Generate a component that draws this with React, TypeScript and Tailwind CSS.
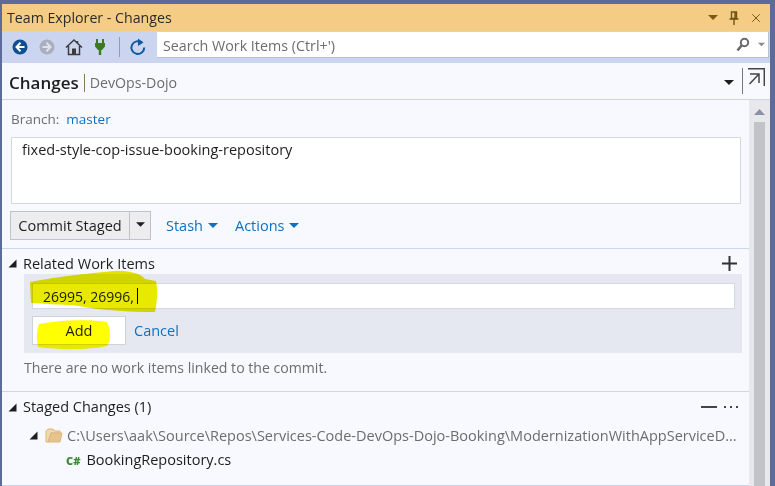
import { X } from "lucide-react";

const font = "font-['Open_Sans','Noto_Sans',sans-serif]";

function Triangle() {
  return (
    <svg width="11" height="11" viewBox="0 0 11 11" className="shrink-0">
      <path d="M9.5 1.5V9.5H1.5Z" fill="#1e1e1e" />
    </svg>
  );
}

function Caret({ className = "" }: { className?: string }) {
  return (
    <svg width="10" height="5" viewBox="0 0 10 5" className={className}>
      <path d="M0 0H10L5 5Z" fill="currentColor" />
    </svg>
  );
}

function Toolbar() {
  return (
    <div className="flex h-8 shrink-0 items-center bg-[#ccd5f0] pl-[10px] pr-[1px]">
      <svg width="16" height="16" viewBox="0 0 16 16">
        <circle cx="8" cy="8" r="7.5" fill="#0e4f8f" />
        <path d="M8.5 3.8 4.5 8l4 4.2M4.8 8H12.5" fill="none" stroke="#fff" strokeWidth="2" />
      </svg>
      <svg width="16" height="16" viewBox="0 0 16 16" className="ml-[11px]">
        <circle cx="8" cy="8" r="7.5" fill="#a9afbd" />
        <path d="M7.5 3.8 11.5 8l-4 4.2M11.2 8H3.5" fill="none" stroke="#dfe3ee" strokeWidth="2" />
      </svg>
      <svg width="18" height="18" viewBox="0 0 18 18" className="ml-[10px]">
        <path d="M1 9.5 9 2l8 7.5M3.5 8v8.5h11V8M12.5 3v3" fill="none" stroke="#3c3c3c" strokeWidth="1.5" />
        <path d="M7 16.5v-6h4v6Z" fill="#3c3c3c" />
      </svg>
      <svg width="10" height="18" viewBox="0 0 10 18" className="ml-[12px]">
        <path d="M2 1v4M8 1v4" stroke="#3b7a1e" strokeWidth="2" />
        <path d="M0 5h10v3.5L7 12H6.2v5H3.8v-5H3L0 8.5Z" fill="#3b7a1e" />
      </svg>
      <div className="ml-[14px] h-[20px] w-px bg-[#8e9bbd]" />
      <svg width="18" height="18" viewBox="0 0 18 18" className="ml-[9px]">
        <path d="M12.8 4.6A6.4 6.4 0 1 0 15.2 9.5" fill="none" stroke="#0e5a9c" strokeWidth="2" />
        <path d="M9 0.5V8L14.5 4.5Z" fill="#0e5a9c" />
      </svg>
      <div className="mb-[4px] ml-[10px] flex h-[26px] min-w-0 flex-1 items-center border-b border-r border-[#b9c0d3] bg-white pl-[6px] text-[14.3px] text-[#6d6d6d]">
        <span className="flex-1 pt-[2px]">Search Work Items (Ctrl+')</span>
        <svg width="18" height="16" viewBox="0 0 18 16" className="mr-[2px]">
          <circle cx="8.5" cy="5.5" r="3.7" fill="none" stroke="#6a6a6a" strokeWidth="2" />
          <path d="M5.7 8.3 1.5 13.5" stroke="#6a6a6a" strokeWidth="2.6" />
        </svg>
        <Caret className="ml-[2px] mr-[3px] w-[7px] text-[#8a8a8a]" />
      </div>
    </div>
  );
}

function SectionHeading({ title, className, children }: { title: string; className: string; children?: React.ReactNode }) {
  return (
    <div className={`flex items-center pl-[5px] pr-[12px] ${className}`}>
      <Triangle />
      <span className="ml-[5px] flex-1 text-[14.5px] font-medium text-[#1e1e1e]">{title}</span>
      {children}
    </div>
  );
}

export default function App() {
  return (
    <div className={`${font} flex h-[486px] w-[775px] flex-col overflow-hidden bg-[#5d6b99] pl-[2px] pr-[5px] pt-[4px]`}>
      <div className="flex h-[27px] shrink-0 items-center bg-[#f5cc84] pl-[5px] pr-[7px] text-[14.2px] text-[#2b2b2b]">
        <span className="flex-1">Team Explorer - Changes</span>
        <Caret className="mr-[11px] text-[#7a5a14]" />
        <svg width="10" height="14" viewBox="0 0 10 14" className="mr-[10px]">
          <path d="M2.5 1h5v6.5h-5ZM0.5 8h9M5 8v6M6 1v6" fill="none" stroke="#6e5212" strokeWidth="1.4" />
        </svg>
        <X size={14} strokeWidth={1.6} className="text-[#6e5212]" />
      </div>
      <Toolbar />
      <div className="flex h-[37px] shrink-0 items-center border-b border-[#ccd5f0] bg-[#f8f9fe] pl-[7px] pr-[5px]">
        <span className="mt-[3px] text-[17px] font-semibold text-[#1e1e1e]">Changes</span>
        <span className="ml-[5px] mr-[5px] mt-[3px] h-[18px] w-px bg-[#8a7a5a]" />
        <span className="mt-[3px] flex-1 text-[14.2px] text-[#6d6d6d]">DevOps-Dojo</span>
        <Caret className="mr-[8px] mt-[3px] text-[#1e1e1e]" />
        <div className="h-[26px] w-px bg-[#777]" />
        <svg width="17" height="18" viewBox="0 0 17 18" className="ml-[5px] mt-[5px] self-start">
          <path d="M0 .7H16.3V18M2 6h9v9M11 6 1.5 16" fill="none" stroke="#444" strokeWidth="1.5" />
        </svg>
      </div>
      <div className="flex min-h-0 flex-1 bg-[#f8f9fe]">
        <div className="relative flex min-w-0 flex-1 flex-col">
          <div className="flex flex-col border-b border-[#ccd5f0] pb-[8px]">
            <div className="flex h-[37px] items-center pl-[9px] pt-[2px] text-[13.5px]">
              <span className="text-[#6d6d6d]">Branch:</span>
              <span className="ml-[7px] text-[#0e70c0]">master</span>
            </div>
            <div className="ml-[9px] mr-[8px] h-[67px] border border-[#d5d8e2] bg-white pl-[10px] pt-[1px] text-[14.5px] text-[#1e1e1e]">
              fixed-style-cop-issue-booking-repository
            </div>
            <div className="ml-[8px] mt-[7px] flex items-center text-[14.5px]">
              <div className="flex h-[29px] w-[120px] items-center justify-center border border-[#c0c1c9] bg-[#ededf0] text-[#1e1e1e]">Commit Staged</div>
              <div className="flex h-[29px] w-[21px] items-center justify-center border border-l-0 border-[#c0c1c9] bg-[#ededf0]">
                <Caret className="mb-[2px] w-[9px] text-[#1e1e1e]" />
              </div>
              <span className="ml-[15px] text-[#0e70c0]">Stash</span>
              <Caret className="ml-[5px] text-[#0e70c0]" />
              <span className="ml-[17px] text-[#0e70c0]">Actions</span>
              <Caret className="ml-[5px] text-[#0e70c0]" />
            </div>
          </div>
          <SectionHeading title="Related Work Items" className="h-[25px] shrink-0 pt-[4px]">
            <svg width="15" height="15" viewBox="0 0 15 15">
              <path d="M7.5 0v15M0 7.5h15" stroke="#333" strokeWidth="2" />
            </svg>
          </SectionHeading>
          <div className="ml-[22px] mr-[7px] flex h-[79px] shrink-0 flex-col bg-[#e6e8f1] pl-[8px] pr-[7px] pt-[9px]">
            <div className="flex h-[26px] items-center border border-[#d5d8e2] bg-white pl-[10px] text-[14px] text-[#1e1e1e]">
              26995, 26996,
              <span className="ml-[3px] h-[16px] w-px bg-black" />
            </div>
            <div className="mt-[7px] flex items-center text-[14.5px]">
              <div className="flex h-[29px] w-[94px] items-center justify-center border border-[#d0d2da] bg-white text-[#1e1e1e]">Add</div>
              <span className="ml-[8px] text-[#0e70c0]">Cancel</span>
            </div>
          </div>
          <div className="flex h-[39px] shrink-0 items-center border-b border-[#ccd5f0] pb-[9px] pl-[22px] text-[14.1px] text-[#6d6d6d]">
            There are no work items linked to the commit.
          </div>
          <SectionHeading title="Staged Changes (1)" className="h-[30px] shrink-0">
            <div className="mr-[7px] h-[2px] w-[16px] bg-[#444]" />
            <svg width="14" height="2" viewBox="0 0 14 2" className="mr-[-1px]">
              <path d="M0 0h2v2H0ZM6 0h2v2H6ZM12 0h2v2h-2Z" fill="#444" />
            </svg>
          </SectionHeading>
          <div className="flex h-[27px] shrink-0 items-center pl-[26px] pr-[11px]">
            <Triangle />
            <svg width="18" height="15" viewBox="0 0 18 15" className="ml-[6px] shrink-0">
              <path d="M1 14V3l2-2h5l2 2h5v2H6L3 14Z" fill="#f0d9b0" stroke="#dcb67a" />
              <path d="M3 14 6 5h11l-2 9Z" fill="#e6c48f" stroke="#dcb67a" />
            </svg>
            <span className="ml-[4px] truncate text-[14.5px] text-[#6d6d6d]">C:\Users\aak\Source\Repos\Services-Code-DevOps-Dojo-Booking\ModernizationWithAppServiceD...</span>
          </div>
          <div className="flex h-[22px] shrink-0 items-center pl-[64px] text-[14.5px] text-[#1e1e1e]">
            <span className="mr-[6px] text-[11px] font-extrabold leading-none text-[#388a34]">C#</span>
            BookingRepository.cs
          </div>
          <div className="mt-[14px] border-b border-[#ccd5f0]" />
          <svg width="160" height="100" viewBox="0 0 160 100" className="pointer-events-none absolute left-[27px] top-[168px] mix-blend-multiply">
            <path d="M1 14C20 10 60 5 85 3C100 2 112 6 116 11L127 13C129 22 128 36 126 44C100 44 70 42 50 38C30 36 12 36 2 35Z" fill="#e9e900" />
            <path d="M10 56C30 52 60 51 78 54C82 62 82 72 78 78C60 82 30 82 9 79C7 70 8 62 10 56Z" fill="#ffff00" />
          </svg>
        </div>
        <div className="flex w-[21px] shrink-0 justify-center bg-[#e8e8ec]">
          <div className="flex w-[11px] flex-col items-center">
            <svg width="11" height="6" viewBox="0 0 11 6" className="mt-[9px]">
              <path d="M0 6 5.5 0 11 6Z" fill="#8a90a5" />
            </svg>
            <div className="mt-[7px] w-[11px] flex-1 bg-[#c2c3c9]" />
          </div>
        </div>
      </div>
    </div>
  );
}
